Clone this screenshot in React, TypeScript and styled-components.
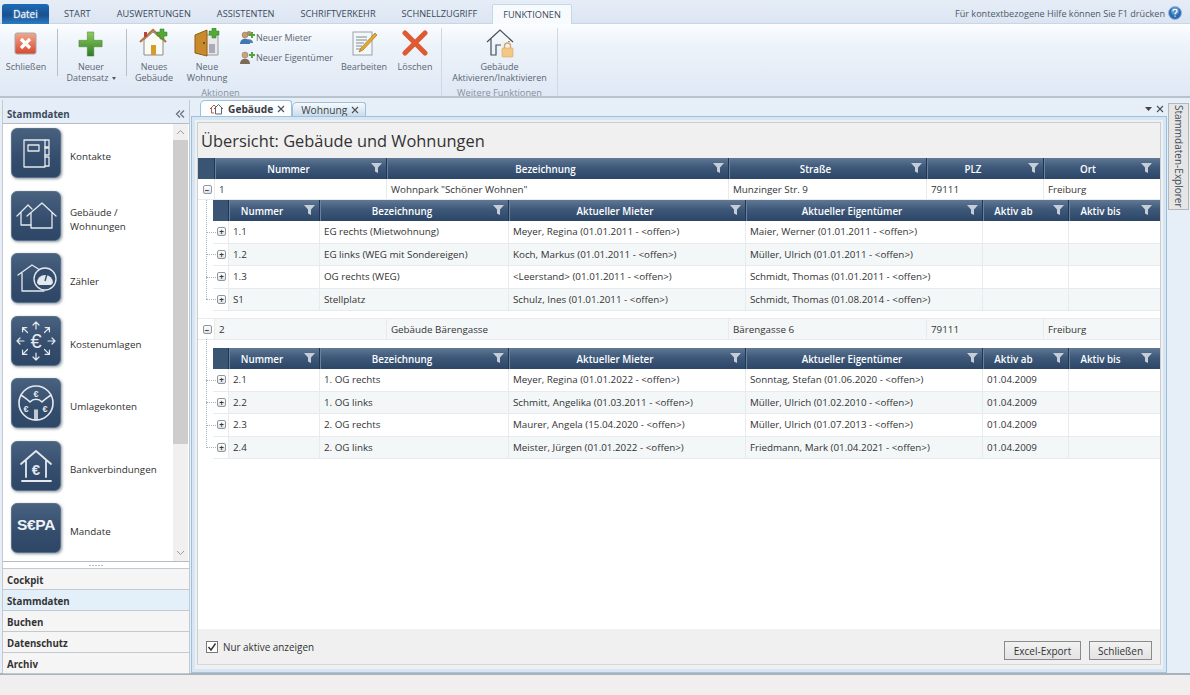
import React from "react";
import styled, { createGlobalStyle } from "styled-components";

const Global = createGlobalStyle`
  html, body { margin: 0; padding: 0; width: 1190px; height: 695px; overflow: hidden; background: #f0eeee; }
  * { box-sizing: border-box; }
  body { font-family: "Open Sans", "Noto Sans", sans-serif; font-size: 10px; color: #333; }
`;

const Page = styled.div`
  width: 1190px; height: 695px; display: flex; flex-direction: column; overflow: hidden;
`;

/* ---------- ribbon ---------- */
const TabStrip = styled.div`
  height: 24px; flex: none; display: flex; align-items: flex-end; padding: 3px 8px 0 2px;
  background: linear-gradient(#e6edf7, #dbe5f2); border-bottom: 1px solid #c9d6e5;
`;
const FileTab = styled.div`
  width: 47px; height: 20px; margin: 0 2px -1px 0; display: flex; align-items: center; justify-content: center;
  background: linear-gradient(#1c6cb8, #19508f 55%, #2a7cc6); color: #fff; border-radius: 3px 3px 0 0;
  font-size: 10px; text-shadow: 0 0 2px #bfe0ff;
`;
const RibbonTab = styled.div<{ $active?: boolean }>`
  height: ${p => (p.$active ? "20px" : "19px")}; margin-bottom: ${p => (p.$active ? "-1px" : "0")};
  padding: 0 ${p => (p.$active ? "10px" : "13px")}; margin-left: ${p => (p.$active ? "2px" : "0")};
  display: flex; align-items: center; font-size: 9.2px; color: #3c4a5a;
  background: ${p => (p.$active ? "#f8fbfe" : "transparent")};
  border: ${p => (p.$active ? "1px solid #c9d6e5" : "none")};
  border-bottom: none; border-radius: 2px 2px 0 0;
`;
const HelpText = styled.div`
  margin-left: auto; height: 20px; display: flex; align-items: center; gap: 3px; font-size: 9.1px; color: #4d5a68;
`;
const Ribbon = styled.div`
  height: 74px; flex: none; display: flex; padding-top: 4px;
  background: linear-gradient(#fbfdff, #edf3fa 30%, #dfe8f4);
  border-bottom: 2px solid #b9c3ce;
`;
const Group = styled.div<{ $w: number }>`
  width: ${p => p.$w}px; flex: none; display: flex; flex-direction: column; border-right: 1px solid #cfd9e4; height: 68px;
`;
const GroupItems = styled.div`
  height: 59px; display: flex; flex: none;
`;
const GroupLabel = styled.div`
  text-align: center; font-size: 9.3px; line-height: 12px; color: #8592a0;
`;
const RButton = styled.div<{ $w: number }>`
  width: ${p => p.$w}px; flex: none; display: flex; flex-direction: column; align-items: center;
  font-size: 9px; line-height: 11px; color: #5b6672; text-align: center; white-space: nowrap;
  svg { display: block; flex: none; }
`;
const RSep = styled.div<{ $l: number; $r: number }>`
  width: 1px; height: 47px; flex: none; margin: 1px ${p => p.$r}px 0 ${p => p.$l}px; background: #b6c0cb;
`;
const SmallList = styled.div`
  width: 105px; margin: 0 0 0 1px; flex: none; display: flex; flex-direction: column; gap: 2px; padding-left: 5px;
`;
const SmallItem = styled.div`
  height: 18px; display: flex; align-items: center; gap: 1px; font-size: 9px; color: #5b6672; white-space: nowrap;
`;
const Caret = styled.span`
  display: inline-block; margin-left: 3px; border-left: 2.5px solid transparent; border-right: 2.5px solid transparent;
  border-top: 3px solid #555; vertical-align: middle;
`;

/* ---------- workspace ---------- */
const Workspace = styled.div`
  height: 577px; flex: none; display: flex; background: #e6eef8; padding-top: 2px; border-bottom: 2px solid #a9b1b9;
`;
const Sidebar = styled.div`
  width: 188px; margin-left: 2px; flex: none; display: flex; flex-direction: column;
  border-left: 1px solid #c4c9ce; border-right: 1px solid #c4c9ce;
`;
const SideHead = styled.div`
  height: 24px; flex: none; display: flex; align-items: center; justify-content: space-between;
  padding: 5px 4px 0 4px; background: #e4edf8; border-bottom: 1px solid #b5bcc4;
  font-weight: 700; font-size: 9.7px; color: #3b4a5a;
`;
const SideList = styled.div`
  height: 438px; flex: none; display: flex; background: #fff; border-bottom: 1px solid #b5bcc4;
`;
const Tiles = styled.div`
  flex: 1; display: grid; grid-auto-rows: 62.5px; padding-top: 3px; align-content: start;
`;
const TileRow = styled.div`
  display: flex; align-items: flex-start; padding: 1px 0 0 8px; gap: 9px;
`;
const TileBox = styled.div`
  width: 50px; height: 50px; flex: none; border-radius: 6px;
  background: linear-gradient(#48617f, #344d6d 60%, #2f4767);
  box-shadow: 1px 1px 3px #8a94a0; border: 1px solid #5a6f88;
  display: flex; align-items: center; justify-content: center;
`;
const TileLabel = styled.div`
  height: 50px; display: flex; align-items: center; font-size: 9.8px; line-height: 14px; color: #2f2f2f; padding-top: 8px;
`;
const Track = styled.div`
  width: 15px; margin-right: 1px; flex: none; background: #f0f0f0; display: flex; flex-direction: column; align-items: center;
`;
const TrackEnd = styled.div`
  height: 16px; flex: none; display: flex; align-items: center; justify-content: center;
`;
const TrackFill = styled.div`
  flex: 1;
`;
const Thumb = styled.div`
  width: 15px; height: 304px; flex: none; background: #cdcdcd;
`;
const Splitter = styled.div`
  height: 7px; flex: none; background: #fff; display: flex; align-items: center; justify-content: center;
  gap: 1px; border-bottom: 1px solid #c4c9ce;
`;
const Dot = styled.i`
  width: 2px; height: 1px; background: #b8bcc0; display: block;
`;
const NavRow = styled.div<{ $active?: boolean }>`
  height: 21px; flex: none; display: flex; align-items: center; padding: 2px 0 0 4px; font-weight: 700; font-size: 9.7px;
  color: #333; background: ${p => (p.$active ? "#e3f0fa" : "#f5f5f5")}; border-bottom: 1px solid #c4c9ce;
`;

const Main = styled.div`
  width: 976px; margin-left: 1px; flex: none; display: flex; flex-direction: column;
`;
const DocTabs = styled.div`
  height: 16px; flex: none; display: flex; align-items: flex-end; padding-left: 9px;
`;
const DocTab = styled.div<{ $active?: boolean }>`
  height: ${p => (p.$active ? "16px" : "14px")}; padding: 0 6px 0 8px; display: flex; align-items: center; gap: 4px;
  font-size: 10.2px; font-weight: ${p => (p.$active ? 700 : 400)}; color: #3b3f45;
  background: ${p => (p.$active ? "#fbfdff" : "linear-gradient(#f6f9fc, #c9dded)")};
  border: 1px solid #9fc0da; border-bottom: none; border-radius: 5px 3px 0 0;
`;
const PaneTools = styled.div`
  margin-left: auto; display: flex; align-items: center; gap: 4px; padding: 0 3px 3px 0; font-size: 11px; color: #444; line-height: 10px;
`;
const Frame = styled.div`
  flex: 1; display: flex; flex-direction: column; min-height: 0; background: #f0f0f0;
  border: 1px solid #9fc0da; border-bottom: 1px solid #a9c2d8; box-shadow: inset 0 0 0 3px #d6e6f4;
  padding: 5px 5px 7px 5px;
`;
const Inner = styled.div`
  flex: 1; display: flex; flex-direction: column; min-height: 0; border: 1px solid #c9ced3; border-bottom-color: #d4d8dc;
`;
const Title = styled.div`
  height: 35px; flex: none; padding: 7px 0 0 3px; font-size: 16.4px; line-height: 22px; color: #333; background: #f0f0f0;
`;
const GridArea = styled.div`
  height: 471px; flex: none; background: #fff;
`;
const Footer = styled.div`
  flex: 1; display: flex; align-items: flex-start; padding: 12px 8px 0 8px; gap: 5px; background: #f0f0f0;
`;
const Check = styled.div`
  width: 12px; height: 12px; flex: none; background: #fff; border: 1px solid #7a7a7a; display: flex; align-items: center; justify-content: center;
`;
const CheckLabel = styled.div`
  font-size: 9.9px; line-height: 12px; color: #333; flex: 1;
`;
const Btn = styled.div<{ $w: number }>`
  width: ${p => p.$w}px; height: 19px; flex: none; margin-left: 3px; display: flex; align-items: center; justify-content: center;
  background: linear-gradient(#f2f2f2, #e3e3e3); border: 1px solid #8b8b8b; font-size: 10px; color: #333;
`;

const Rail = styled.div`
  flex: 1; padding: 3px 0 0 1px; min-width: 0;
`;
const RailTab = styled.div`
  width: 21px; height: 107px; background: #e6e6e6; border: 1px solid #b4b8bc; display: flex; align-items: center; justify-content: center;
  writing-mode: vertical-rl; font-size: 10px; color: #3f4a55;
`;

const StatusBar = styled.div`
  flex: 1; background: #f0eeee;
`;

/* ---------- data grid ---------- */
const HeadRow = styled.div<{ $cols: string; $inset?: number }>`
  display: grid; grid-template-columns: ${p => p.$cols}; height: 21px; margin-left: ${p => p.$inset ?? 0}px;
  background: linear-gradient(#607894, #3e587a 45%, #2d4666);
`;
const HeadCell = styled.div`
  position: relative; display: flex; align-items: center; justify-content: center; padding: 1px 24px 0 0;
  border-left: 1px solid #1f3550; box-shadow: inset 1px 0 0 #6a82a0;
  font-size: 9.8px; font-weight: 600; color: #fff; white-space: nowrap;
  &:first-child { border-left: none; box-shadow: none; background: #3a5474; padding: 0; }
  svg { position: absolute; right: 4px; top: 5px; }
`;
const DataRow = styled.div<{ $cols: string; $alt?: boolean; $h?: number; $inset?: number; $boxed?: boolean }>`
  display: grid; grid-template-columns: ${p => p.$cols}; height: ${p => p.$h ?? 22.5}px; margin-left: ${p => p.$inset ?? 0}px;
  background: ${p => (p.$alt ? "#f4f7f8" : "#fff")}; border-bottom: 1px solid #e7ebee;
  border-top: ${p => (p.$boxed ? "1px solid #e7ebee" : "none")};
`;
const Cell = styled.div`
  display: flex; align-items: center; padding-left: 4px; font-size: 9.8px; color: #333; white-space: nowrap; overflow: hidden;
  border-left: 1px solid #e7ebee;
`;
const TreeCell = styled.div`
  position: relative; display: flex; align-items: center; justify-content: center; background: #fff; overflow: visible; padding-left: 2px;
`;
const TreeBox = styled.div`
  width: 9px; height: 9px; position: relative; z-index: 1; border: 1px solid #8f979e; border-radius: 2px; background: linear-gradient(#fff, #dfe3e7);
  display: flex; align-items: center; justify-content: center; font-size: 8px; line-height: 7px; font-weight: 700; color: #333;
`;
const Branch = styled.div`
  position: absolute; left: -7px; width: 12px; top: 50%; border-top: 1px dotted #aab1b7;
`;
const Group1 = styled.div<{ $h: number; $end: number }>`
  position: relative; height: ${p => p.$h}px;
  &::before {
    content: ""; position: absolute; left: 8px; top: 16px; height: ${p => p.$end - 16}px; border-left: 1px dotted #aab1b7;
  }
`;
const Gap = styled.div<{ $h: number }>`
  height: ${p => p.$h}px;
`;

/* ---------- icons ---------- */
const Funnel = () => (
  <svg width="11" height="10" viewBox="0 0 11 10"><path d="M0 0h11L7 4.5V10L4 8.5V4.5Z" fill="#c5ced8" /></svg>
);

const Stroke = { fill: "none", stroke: "#e4e9ef", strokeWidth: 1.3, strokeLinejoin: "round" as const, strokeLinecap: "round" as const };

const KontakteIcon = () => (
  <svg width="48" height="48" viewBox="0 0 48 48"><g {...Stroke}>
    <rect x="12" y="11" width="21" height="27" /><rect x="16" y="16" width="11" height="6" />
    <path d="M33 11h4v7h-4M33 19h4v7h-4M33 28h4v9h-4" /></g></svg>
);
const HausIcon = () => (
  <svg width="48" height="48" viewBox="0 0 48 48"><g {...Stroke}>
    <path d="M15 24 30 11 44 24M19 21V36H40V21" /><path d="M5 24 16 13 20 17M9 21V33H19" /></g></svg>
);
const ZaehlerIcon = () => (
  <svg width="48" height="48" viewBox="0 0 48 48"><g {...Stroke}>
    <path d="M6 21 20 11 28 16M10 19V37H32" /><circle cx="33" cy="25" r="11" fill="#344d6d" /></g>
    <path d="M25 29a8 8 0 0 1 16 0l-2 2H27Z" fill="#e4e9ef" /><path d="M33 27l2-7" stroke="#344d6d" strokeWidth="1.4" /></svg>
);
const UmlageIcon = () => {
  const a = [0, 45, 90, 135, 180, 225, 270, 315];
  return (
    <svg width="48" height="48" viewBox="0 0 48 48">
      {a.map(d => (
        <g key={d} transform={`rotate(${d} 24 24)`} {...Stroke} strokeWidth={1.2}>
          <path d="M24 12V5M21 8l3-3 3 3" />
        </g>
      ))}
      <text x="24" y="31" textAnchor="middle" fontSize="20" fill="#e4e9ef" fontFamily="'Liberation Sans', sans-serif">€</text>
    </svg>
  );
};
const KontoIcon = () => (
  <svg width="48" height="48" viewBox="0 0 48 48">
    <g {...Stroke} strokeWidth={1.6}>
      <circle cx="24" cy="24" r="17" /><path d="M9 16c4 3 7 5 9 7M39 16c-4 3-7 5-9 7M23 41V31M25 41V31M18 23a8 8 0 0 1 12 0" />
    </g>
    <g fill="#e4e9ef" fontSize="9" fontWeight="700" textAnchor="middle" fontFamily="'Liberation Sans', sans-serif">
      <text x="24" y="18">€</text><text x="14" y="33">€</text><text x="33" y="33">€</text>
    </g>
  </svg>
);
const BankIcon = () => (
  <svg width="48" height="48" viewBox="0 0 48 48">
    <g {...Stroke} strokeWidth={1.8}><path d="M9 22 24 9 39 22M14 19V35M34 19V35M10 39H39" /></g>
    <text x="24" y="33" textAnchor="middle" fontSize="15" fontWeight="700" fill="#e4e9ef" fontFamily="'Liberation Sans', sans-serif">€</text>
  </svg>
);
const SepaMark = styled.span`
  font-family: "Liberation Sans", sans-serif; font-weight: 700; font-size: 15.5px; color: #eef2f6; letter-spacing: -0.3px; margin-top: -6px;
`;

const CloseIcon = () => (
  <svg width="24" height="24" viewBox="0 0 24 24" style={{ marginTop: 4, marginBottom: 5 }}>
    <defs><linearGradient id="cg" x1="0" y1="0" x2="0" y2="1"><stop offset="0" stopColor="#f0a890" /><stop offset="1" stopColor="#d8482e" /></linearGradient></defs>
    <rect x="1" y="1" width="21" height="21" rx="2" fill="url(#cg)" stroke="#a8a8a8" />
    <path d="M7 7l9 9M16 7l-9 9" stroke="#fff" strokeWidth="3.2" />
  </svg>
);
const PlusIcon = () => (
  <svg width="26" height="26" viewBox="0 0 28 28" style={{ marginTop: 3, marginBottom: 4 }}>
    <defs><linearGradient id="pg" x1="0" y1="0" x2="0" y2="1"><stop offset="0" stopColor="#8fca5c" /><stop offset="1" stopColor="#2f7d25" /></linearGradient></defs>
    <path d="M10 1h7v9h9v7h-9v10h-7V17H1v-7h9Z" fill="url(#pg)" stroke="#3d7d2e" strokeWidth=".5" />
  </svg>
);
const MiniPlus = ({ x, y }: { x: number; y: number }) => (
  <path d={`M${x + 3} ${y}h4v3h3v4h-3v3h-4v-3h-3v-4h3Z`} fill="#54a838" stroke="#2f7d25" strokeWidth=".5" />
);
const NewHouseIcon = () => (
  <svg width="30" height="30" viewBox="0 0 30 30" style={{ marginBottom: 3 }}>
    <path d="M5 12V27H24V12L14 4Z" fill="#fbfbf6" stroke="#8b8b8b" />
    <path d="M1 14 14 2 27 14" fill="none" stroke="#b8743a" strokeWidth="2.2" />
    <rect x="5" y="4" width="3" height="5" fill="#b8453a" />
    <rect x="12" y="17" width="5" height="10" fill="#d89a2c" />
    <MiniPlus x={18} y={1} />
  </svg>
);
const DoorIcon = () => (
  <svg width="30" height="30" viewBox="0 0 30 30" style={{ marginBottom: 3 }}>
    <path d="M14 7h12v20H14Z" fill="#e8e8e8" stroke="#9a9a9a" />
    <path d="M3 7 15 2V28L3 25Z" fill="#c98a2c" stroke="#8f5d17" />
    <rect x="17" y="16" width="6" height="9" fill="#aab" />
    <circle cx="12" cy="15" r="1" fill="#5c3d10" />
    <MiniPlus x={17} y={0} />
  </svg>
);
const PeopleIcon = ({ second }: { second?: boolean }) => (
  <svg width="16" height="16" viewBox="0 0 16 16">
    {!second && <><circle cx="10" cy="4.5" r="2.5" fill="#b88e6a" /><path d="M6 14c0-5 8-5 8 0Z" fill="#5580a8" /></>}
    <circle cx="6" cy="6" r="3" fill={second ? "#c9a27e" : "#c49a72"} stroke="#7a6048" strokeWidth=".4" />
    <path d="M1 15c0-7 10-7 10 0Z" fill={second ? "#7c6a58" : "#3f78b0"} />
    <path d="M10 5h2V3h2v2h2v2h-2v2h-2V7h-2Z" fill="#4fa63a" />
  </svg>
);
const EditIcon = () => (
  <svg width="28" height="28" viewBox="0 0 28 28" style={{ marginTop: 1, marginBottom: 4 }}>
    <rect x="3" y="3" width="19" height="23" fill="#f4f6f8" stroke="#97a2ac" />
    <path d="M6 8h11M6 11h11M6 14h8M6 17h6M6 20h5" stroke="#7e8c98" strokeWidth="1" />
    <path d="M25 4l2 2-14 15-4 2 2-4Z" fill="#e9a92a" stroke="#8d6412" strokeWidth=".6" />
  </svg>
);
const DeleteIcon = () => (
  <svg width="26" height="26" viewBox="0 0 26 26" style={{ marginTop: 2, marginBottom: 5 }}>
    <path d="M3 3 23 23M23 3 3 23" stroke="#dd5a33" strokeWidth="5" strokeLinecap="round" />
  </svg>
);
const LockHouseIcon = () => (
  <svg width="30" height="30" viewBox="0 0 30 30" style={{ marginBottom: 3 }}>
    <path d="M2 14 15 2 28 14M6 11V27H11V17H16" fill="none" stroke="#4a4f55" strokeWidth="1.2" />
    <path d="M24 14v-1" stroke="#4a4f55" strokeWidth="1.2" />
    <rect x="17" y="20" width="11" height="9" rx="1" fill="#f3c887" stroke="#dca45c" strokeWidth=".6" />
    <path d="M19.5 20v-2a3 3 0 0 1 6 0v2" fill="none" stroke="#dca45c" strokeWidth="1.4" />
  </svg>
);
const HelpIcon = () => (
  <svg width="14" height="14" viewBox="0 0 14 14">
    <circle cx="7" cy="7" r="6.5" fill="#2a6bb0" stroke="#9ab8d6" /><circle cx="7" cy="5" r="4" fill="#6fa6dc" opacity=".7" />
    <path d="M5 5.2c0-2.4 4-2.4 4 0 0 1.4-2 1.4-2 3M7 9.6v1.2" fill="none" stroke="#fff" strokeWidth="1.2" />
  </svg>
);
const TabHouse = () => (
  <svg width="15" height="12" viewBox="0 0 15 12">
    <path d="M1 6 5 2 7 4M2.5 5v5H5" fill="none" stroke="#c25a3a" strokeWidth="1" />
    <path d="M5 6 9.5 1.5 14 6M6.5 5v6h6V5" fill="none" stroke="#5a6672" strokeWidth="1" />
  </svg>
);
const Chevron = ({ up }: { up?: boolean }) => (
  <svg width="9" height="6" viewBox="0 0 9 6"><path d={up ? "M1 5l3.5-3.5L8 5" : "M1 1l3.5 3.5L8 1"} fill="none" stroke="#9a9a9a" strokeWidth="1" /></svg>
);
const XMark = () => (
  <svg width="8" height="8" viewBox="0 0 8 8"><path d="M1 1l6 6M7 1L1 7" stroke="#4a4f55" strokeWidth="1.1" /></svg>
);

/* ---------- data ---------- */
const OUTER = "16px 172px 342px 198px 117px 113px";
const INNER = "15px 91px 189px 237px 237px 86px 88px";
const OUTER_HEAD = ["", "Nummer", "Bezeichnung", "Straße", "PLZ", "Ort"];
const INNER_HEAD = ["", "Nummer", "Bezeichnung", "Aktueller Mieter", "Aktueller Eigentümer", "Aktiv ab", "Aktiv bis"];

const tiles: [React.ReactNode, React.ReactNode][] = [
  [<KontakteIcon />, "Kontakte"],
  [<HausIcon />, <span>Gebäude /<br />Wohnungen</span>],
  [<ZaehlerIcon />, "Zähler"],
  [<UmlageIcon />, "Kostenumlagen"],
  [<KontoIcon />, "Umlagekonten"],
  [<BankIcon />, "Bankverbindungen"],
  [<SepaMark>S€PA</SepaMark>, "Mandate"],
];

const rows1 = [
  ["1.1", "EG rechts (Mietwohnung)", "Meyer, Regina (01.01.2011 - <offen>)", "Maier, Werner (01.01.2011 - <offen>)", "", ""],
  ["1.2", "EG links (WEG mit Sondereigen)", "Koch, Markus (01.01.2011 - <offen>)", "Müller, Ulrich (01.01.2011 - <offen>)", "", ""],
  ["1.3", "OG rechts (WEG)", "<Leerstand> (01.01.2011 - <offen>)", "Schmidt, Thomas (01.01.2011 - <offen>)", "", ""],
  ["S1", "Stellplatz", "Schulz, Ines (01.01.2011 - <offen>)", "Schmidt, Thomas (01.08.2014 - <offen>)", "", ""],
];
const rows2 = [
  ["2.1", "1. OG rechts", "Meyer, Regina (01.01.2022 - <offen>)", "Sonntag, Stefan (01.06.2020 - <offen>)", "01.04.2009", ""],
  ["2.2", "1. OG links", "Schmitt, Angelika (01.03.2011 - <offen>)", "Müller, Ulrich (01.02.2010 - <offen>)", "01.04.2009", ""],
  ["2.3", "2. OG rechts", "Maurer, Angela (15.04.2020 - <offen>)", "Müller, Ulrich (01.07.2013 - <offen>)", "01.04.2009", ""],
  ["2.4", "2. OG links", "Meister, Jürgen (01.01.2022 - <offen>)", "Friedmann, Mark (01.04.2021 - <offen>)", "01.04.2009", ""],
];

const Head = ({ cols, labels, inset }: { cols: string; labels: string[]; inset?: number }) => (
  <HeadRow $cols={cols} $inset={inset}>
    {labels.map((l, i) => <HeadCell key={i}>{l}{i > 0 && <Funnel />}</HeadCell>)}
  </HeadRow>
);

const ChildRows = ({ rows }: { rows: string[][] }) => (
  <>
    {rows.map((r, i) => (
      <DataRow key={r[0]} $cols={INNER} $alt={i % 2 === 1} $inset={15}>
        <TreeCell><Branch /><TreeBox>+</TreeBox></TreeCell>
        {r.map((c, j) => <Cell key={j}>{c}</Cell>)}
      </DataRow>
    ))}
  </>
);

const navItems = ["Cockpit", "Stammdaten", "Buchen", "Datenschutz", "Archiv"];

export default function App() {
  return (
    <Page>
      <Global />
      <TabStrip>
        <FileTab>Datei</FileTab>
        <RibbonTab>START</RibbonTab>
        <RibbonTab>AUSWERTUNGEN</RibbonTab>
        <RibbonTab>ASSISTENTEN</RibbonTab>
        <RibbonTab>SCHRIFTVERKEHR</RibbonTab>
        <RibbonTab>SCHNELLZUGRIFF</RibbonTab>
        <RibbonTab $active>FUNKTIONEN</RibbonTab>
        <HelpText>Für kontextbezogene Hilfe können Sie F1 drücken <HelpIcon /></HelpText>
      </TabStrip>
      <Ribbon>
        <Group $w={442}>
          <GroupItems>
            <RButton $w={52}><CloseIcon />Schließen</RButton>
            <RSep $l={5} $r={0} />
            <RButton $w={66}><PlusIcon /><span>Neuer<br />Datensatz<Caret /></span></RButton>
            <RSep $l={2} $r={0} />
            <RButton $w={54}><NewHouseIcon /><span>Neues<br />Gebäude</span></RButton>
            <RButton $w={52}><DoorIcon /><span>Neue<br />Wohnung</span></RButton>
            <SmallList>
              <SmallItem><PeopleIcon />Neuer Mieter</SmallItem>
              <SmallItem><PeopleIcon second />Neuer Eigentümer</SmallItem>
            </SmallList>
            <RButton $w={50}><EditIcon />Bearbeiten</RButton>
            <RButton $w={52}><DeleteIcon />Löschen</RButton>
          </GroupItems>
          <GroupLabel>Aktionen</GroupLabel>
        </Group>
        <Group $w={116}>
          <GroupItems>
            <RButton $w={115}><LockHouseIcon /><span>Gebäude<br />Aktivieren/Inaktivieren</span></RButton>
          </GroupItems>
          <GroupLabel>Weitere Funktionen</GroupLabel>
        </Group>
      </Ribbon>
      <Workspace>
        <Sidebar>
          <SideHead>Stammdaten
            <svg width="10" height="8" viewBox="0 0 10 8"><path d="M5 0.5 1.5 4 5 7.5M9 0.5 5.5 4 9 7.5" fill="none" stroke="#6a7480" strokeWidth="1.3" /></svg>
          </SideHead>
          <SideList>
            <Tiles>
              {tiles.map(([icon, label], i) => (
                <TileRow key={i}><TileBox>{icon}</TileBox><TileLabel>{label}</TileLabel></TileRow>
              ))}
            </Tiles>
            <Track>
              <TrackEnd><Chevron up /></TrackEnd>
              <Thumb />
              <TrackFill />
              <TrackEnd><Chevron /></TrackEnd>
            </Track>
          </SideList>
          <Splitter><Dot /><Dot /><Dot /><Dot /><Dot /></Splitter>
          {navItems.map(n => <NavRow key={n} $active={n === "Stammdaten"}>{n}</NavRow>)}
        </Sidebar>
        <Main>
          <DocTabs>
            <DocTab $active><TabHouse />Gebäude <XMark /></DocTab>
            <DocTab>Wohnung <XMark /></DocTab>
            <PaneTools>
              <svg width="7" height="4" viewBox="0 0 7 4"><path d="M0 0h7L3.5 4Z" fill="#444" /></svg>
              <XMark />
            </PaneTools>
          </DocTabs>
          <Frame>
            <Inner>
              <Title>Übersicht: Gebäude und Wohnungen</Title>
              <GridArea>
                <Head cols={OUTER} labels={OUTER_HEAD} />
                <Group1 $h={139} $end={120}>
                  <DataRow $cols={OUTER} $h={21}>
                    <TreeCell><TreeBox>−</TreeBox></TreeCell>
                    <Cell>1</Cell><Cell>Wohnpark "Schöner Wohnen"</Cell><Cell>Munzinger Str. 9</Cell><Cell>79111</Cell><Cell>Freiburg</Cell>
                  </DataRow>
                  <Head cols={INNER} labels={INNER_HEAD} inset={15} />
                  <ChildRows rows={rows1} />
                </Group1>
                <Group1 $h={141} $end={130}>
                  <DataRow $cols={OUTER} $h={22} $alt $boxed>
                    <TreeCell><TreeBox>−</TreeBox></TreeCell>
                    <Cell>2</Cell><Cell>Gebäude Bärengasse</Cell><Cell>Bärengasse 6</Cell><Cell>79111</Cell><Cell>Freiburg</Cell>
                  </DataRow>
                  <Gap $h={8} />
                  <Head cols={INNER} labels={INNER_HEAD} inset={15} />
                  <ChildRows rows={rows2} />
                </Group1>
              </GridArea>
              <Footer>
                <Check>
                  <svg width="10" height="10" viewBox="0 0 10 10"><path d="M1.5 5 4 8 8.5 1.5" fill="none" stroke="#333" strokeWidth="1.4" /></svg>
                </Check>
                <CheckLabel>Nur aktive anzeigen</CheckLabel>
                <Btn $w={77}>Excel-Export</Btn>
                <Btn $w={63}>Schließen</Btn>
              </Footer>
            </Inner>
          </Frame>
        </Main>
        <Rail><RailTab>Stammdaten-Explorer</RailTab></Rail>
      </Workspace>
      <StatusBar />
    </Page>
  );
}
